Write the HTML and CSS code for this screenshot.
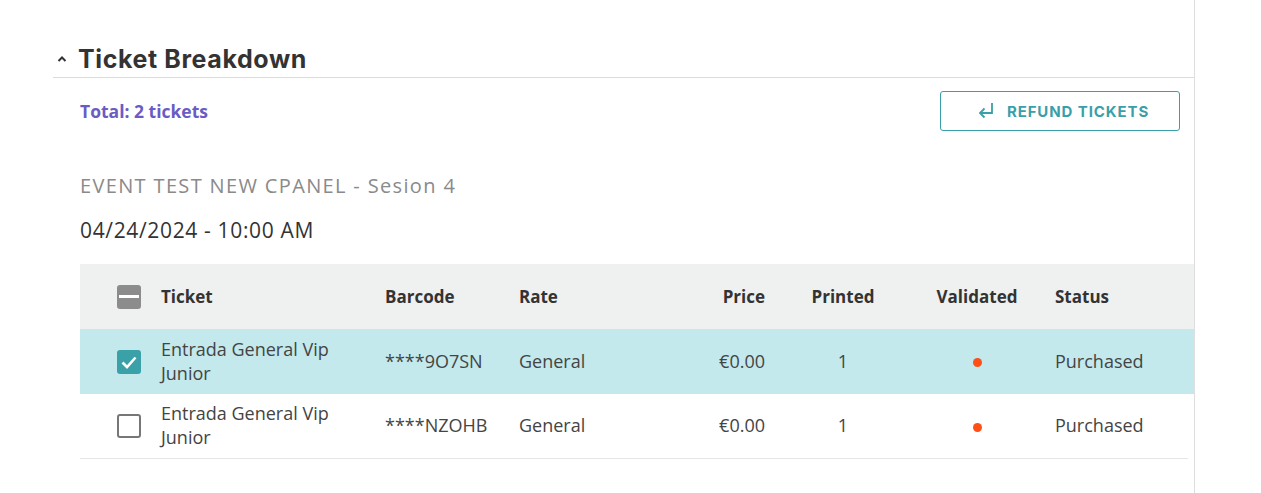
FILE: index.html
```html
<!DOCTYPE html>
<html lang="en">
<head>
<meta charset="utf-8">
<title>Ticket Breakdown</title>
<link rel="stylesheet" href="styles.css">
</head>
<body>
<div class="page">
  <section class="section">
    <div class="section-head">
      <svg class="chev" width="10" height="8" viewBox="0 0 10 8"><path d="M1.5 6 L5 2.5 L8.5 6" fill="none" stroke="#333" stroke-width="2"/></svg>
      <h2 class="title">Ticket Breakdown</h2>
    </div>
    <div class="section-body">
      <div class="toolbar">
        <span class="total">Total: 2 tickets</span>
        <button class="refund-btn">
          <svg class="refund-icon" width="18" height="18" viewBox="0 0 18 18"><path d="M15 2 V12 H3 M7.5 7.5 L3 12 L7.5 16.5" fill="none" stroke="#3a9fa8" stroke-width="1.8"/></svg>
          <span>REFUND TICKETS</span>
        </button>
      </div>
      <div class="event-name">EVENT TEST NEW CPANEL - Sesion 4</div>
      <div class="event-date">04/24/2024 - 10:00 AM</div>
    </div>
    <div class="table">
      <div class="row head">
        <div class="cell check"><span class="cb cb-mixed"></span></div>
        <div class="cell">Ticket</div>
        <div class="cell">Barcode</div>
        <div class="cell">Rate</div>
        <div class="cell right">Price</div>
        <div class="cell center">Printed</div>
        <div class="cell center">Validated</div>
        <div class="cell status">Status</div>
      </div>
      <div class="row selected">
        <div class="cell check"><span class="cb cb-checked"><svg width="20" height="20" viewBox="0 0 20 20"><path d="M3.5 10.5 L8 15 L16.5 5.5" fill="none" stroke="#fff" stroke-width="2.6"/></svg></span></div>
        <div class="cell">Entrada General Vip<br>Junior</div>
        <div class="cell">****9O7SN</div>
        <div class="cell">General</div>
        <div class="cell right">€0.00</div>
        <div class="cell center">1</div>
        <div class="cell center"><span class="dot"></span></div>
        <div class="cell status">Purchased</div>
      </div>
      <div class="row last">
        <div class="cell check"><span class="cb cb-empty"></span></div>
        <div class="cell">Entrada General Vip<br>Junior</div>
        <div class="cell">****NZOHB</div>
        <div class="cell">General</div>
        <div class="cell right">€0.00</div>
        <div class="cell center">1</div>
        <div class="cell center"><span class="dot"></span></div>
        <div class="cell status">Purchased</div>
      </div>
    </div>
  </section>
</div>
</body>
</html>
```
FILE: styles.css
```css
* { box-sizing: border-box; }
html, body { margin: 0; padding: 0; background: #fff; }
body { font-family: "Open Sans", "Noto Sans", sans-serif; color: #444; }

.page {
  width: 1195px;
  min-height: 493px;
  border-right: 1px solid #dedede;
  padding-top: 41px;
}

.section { padding-left: 53px; }

.section-head {
  display: flex;
  align-items: center;
  height: 37px;
  border-bottom: 1px solid #dcdcdc;
  padding-bottom: 1px;
}
.chev { margin: 0 11px 0 4px; }
.title {
  margin: 0;
  font-family: "Inter", "Noto Sans", sans-serif;
  font-weight: 700;
  font-size: 25px;
  color: #333;
  letter-spacing: 0.6px;
}

.section-body { padding: 13px 14px 0 27px; }

.toolbar {
  display: flex;
  justify-content: space-between;
  align-items: center;
}
.total {
  color: #6a5cc4;
  font-weight: 700;
  font-size: 17.5px;
}
.refund-btn {
  width: 240px;
  height: 40px;
  border: 1px solid #3a9fa8;
  border-radius: 3px;
  background: #fff;
  display: flex;
  align-items: center;
  justify-content: center;
  gap: 12px;
  padding: 0 0 0 6px;
  font-family: "Inter", "Noto Sans", sans-serif;
  font-weight: 700;
  font-size: 15px;
  letter-spacing: 0.9px;
  color: #3a9fa8;
  cursor: pointer;
}
.refund-icon { margin-top: -2px; }

.event-name {
  margin-top: 42px;
  font-size: 20px;
  line-height: 26px;
  letter-spacing: 1.35px;
  color: #8a8a8a;
}
.event-date {
  margin-top: 17px;
  font-size: 21px;
  line-height: 28px;
  letter-spacing: 0.65px;
  color: #333;
}

.table { margin: 20px 0 0 27px; }
.row {
  display: grid;
  grid-template-columns: 81px 224px 134px 146px 100px 156px 112px 1fr;
  height: 65px;
  align-items: center;
  font-size: 18px;
  line-height: 24px;
}
.row.head { background: #eff0f0; font-weight: 700; color: #333; font-size: 17px; }
.row.selected { background: #c3e9ec; }
.row.last { border-bottom: 1px solid #e6e6e6; margin-right: 6px; }
.cell { padding-bottom: 2px; }
.row.head .cell { padding-bottom: 0; }
.cell.right { text-align: right; }
.cell.center { text-align: center; }
.cell.status { padding-left: 22px; }
.cell.check { padding-left: 37px; padding-bottom: 0; display: flex; align-items: center; }

.cb {
  width: 24px;
  height: 24px;
  border-radius: 3px;
  display: flex;
  align-items: center;
  justify-content: center;
}
.cb-mixed { background: #8c8c8c; }
.cb-mixed::after {
  content: "";
  width: 20px;
  height: 3px;
  background: #fff;
}
.cb-checked { background: #3aa1a9; }
.cb-empty { border: 2px solid #777; background: #fff; }

.dot {
  display: inline-block;
  width: 9px;
  height: 9px;
  border-radius: 50%;
  background: #ff4f17;
  vertical-align: middle;
}
```
